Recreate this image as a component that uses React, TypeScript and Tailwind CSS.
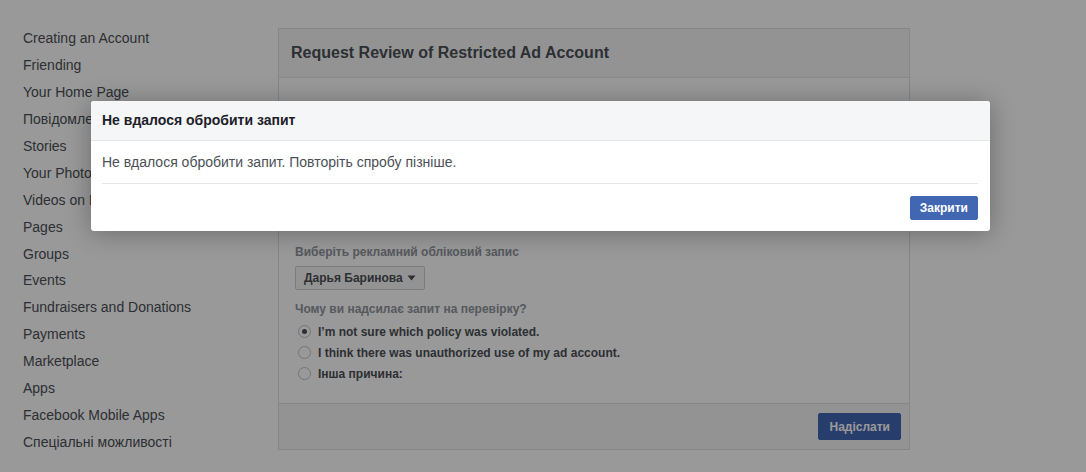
import React from 'react';

const helpTopics = [
  'Creating an Account',
  'Friending',
  'Your Home Page',
  'Повідомлення',
  'Stories',
  'Your Photos',
  'Videos on Facebook',
  'Pages',
  'Groups',
  'Events',
  'Fundraisers and Donations',
  'Payments',
  'Marketplace',
  'Apps',
  'Facebook Mobile Apps',
  'Спеціальні можливості',
];

const reasons = [
  { label: 'I’m not sure which policy was violated.', checked: true },
  { label: 'I think there was unauthorized use of my ad account.', checked: false },
  { label: 'Інша причина:', checked: false },
];

const Radio: React.FC<{ checked: boolean }> = ({ checked }) => (
  <span className="w-[13px] h-[13px] rounded-full border border-[#bec3c9] bg-white flex items-center justify-center shrink-0">
    {checked && <span className="w-[5px] h-[5px] rounded-full bg-[#4b4f56]" />}
  </span>
);

const App: React.FC = () => {
  return (
    <div
      className="relative w-[1086px] h-[472px] overflow-hidden bg-white text-[#4b4f56]"
      style={{ fontFamily: '"Liberation Sans", Arial, "Noto Sans", sans-serif' }}
    >
      <div className="flex pl-[23px]">
        {/* help centre navigation */}
        <nav className="w-[255px] pt-[25px]">
          <ul className="text-[14px] leading-[26.93px] text-[#4b4f56]">
            {helpTopics.map((t) => (
              <li key={t}>{t}</li>
            ))}
          </ul>
        </nav>

        {/* request form */}
        <div className="mt-[28px] w-[632px] h-[422px] border border-[#dddfe2] flex flex-col bg-white">
          <div className="h-[49px] px-3 flex items-center bg-[#f5f6f7] border-b border-[#e5e5e5]">
            <h1 className="text-[16px] font-bold text-[#4b4f56]">Request Review of Restricted Ad Account</h1>
          </div>

          <div className="flex-1 px-4">
            <div className="h-[166px] pt-[30px] text-[12px] leading-[16px] text-[#4b4f56]">
              <p>
                Якщо ви вважаєте, що ваш рекламний обліковий запис було обмежено помилково, надішліть запит на
                перевірку.
              </p>
            </div>
            <div className="text-[12px] font-bold leading-[16px] text-[#90949c]">Виберіть рекламний обліковий запис</div>
            <button className="mt-[6px] h-[24px] px-[8px] flex items-center gap-[4px] border border-[#ccd0d5] bg-[#f5f6f7] rounded-[2px] text-[12px] font-bold text-[#4b4f56]">
              Дарья Баринова
              <svg width="9" height="6" viewBox="0 0 9 6">
                <path d="M0.5 0.5h8L4.5 5.5z" fill="#4b4f56" />
              </svg>
            </button>
            <div className="mt-[11px] text-[12px] font-bold leading-[16px] text-[#90949c]">
              Чому ви надсилає запит на перевірку?
            </div>
            <div className="mt-[4px] flex flex-col">
              {reasons.map((r) => (
                <label key={r.label} className="h-[21px] pl-[3px] flex items-center gap-[7px] text-[12px] font-bold text-[#4b4f56]">
                  <Radio checked={r.checked} />
                  {r.label}
                </label>
              ))}
            </div>
          </div>

          <div className="h-[46px] bg-[#f5f6f7] border-t border-[#dddfe2] flex items-center justify-end pr-[8px]">
            <button className="h-[27px] px-[10px] rounded-[2px] bg-[#4267b2] border border-[#4267b2] text-white text-[12px] font-bold">
              Надіслати
            </button>
          </div>
        </div>
      </div>

      {/* dimmed overlay */}
      <div className="absolute inset-0 bg-black/40" />

      {/* error dialog */}
      <div className="absolute left-[91px] top-[101px] w-[899px] bg-white rounded-[3px] shadow-[0_2px_26px_rgba(0,0,0,0.3)]">
        <div className="h-[40px] px-[11px] flex items-center bg-[#f5f6f7] border-b border-[#e5e5e5] rounded-t-[3px]">
          <h2 className="text-[14px] font-bold text-[#1d2129]">Не вдалося обробити запит</h2>
        </div>
        <div className="pl-[11px] pr-[12px]">
          <p className="pt-[12px] pb-[12px] text-[14px] leading-[18px] text-[#4b4f56] border-b border-[#e5e5e5]">
            Не вдалося обробити запит. Повторіть спробу пізніше.
          </p>
          <div className="pt-[12px] pb-[11px] flex justify-end">
            <button className="h-[24px] px-[9px] rounded-[2px] bg-[#4267b2] border border-[#4267b2] text-white text-[12px] font-bold">
              Закрити
            </button>
          </div>
        </div>
      </div>
    </div>
  );
};

export default App;
